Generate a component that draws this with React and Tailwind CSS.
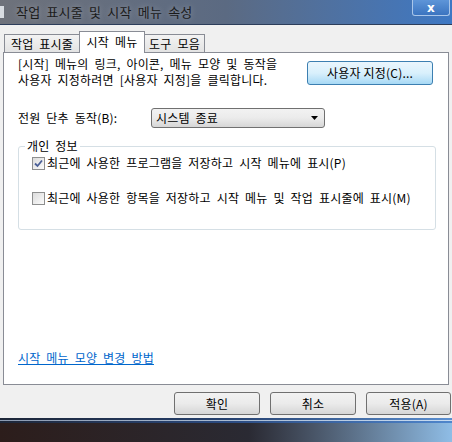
import React from 'react';

const font = { fontFamily: "'Noto Sans CJK KR', 'Liberation Sans', sans-serif" };

const WinButton = ({ children, className = '' }) => (
  <button
    className={`flex items-center justify-center rounded-[3px] border border-[#707070] bg-gradient-to-b from-[#f2f2f2] via-[#ebebeb] to-[#d6d6d6] text-[12px] text-black ${className}`}
  >
    {children}
  </button>
);

const Checkbox = ({ checked }) => (
  <span className="flex h-[13px] w-[13px] flex-shrink-0 items-center justify-center border border-[#8e8f8f] bg-gradient-to-br from-[#dcdcdc] to-[#fbfbfb]">
    {checked && (
      <svg width="9" height="9" viewBox="0 0 9 9">
        <path d="M1 4.5 L3.5 7 L8 1.5" fill="none" stroke="#4a5f97" strokeWidth="1.8" />
      </svg>
    )}
  </span>
);

export default function App() {
  return (
    <div
      className="relative h-[442px] w-[452px] overflow-hidden bg-[#f0f0f0] text-[12px] tracking-[0.2px] text-black [word-spacing:3px]"
      style={font}
    >
      {/* title bar */}
      <div className="flex h-[24px] items-center bg-gradient-to-r from-[#6e727b] via-[#5b6a82] to-[#3d78c4]">
        <div className="ml-[-4px] h-[12px] w-[8px] bg-[#d8dce2]" />
        <span className="ml-[12px] text-[13px] text-[#1b1b1b] [text-shadow:0_0_6px_rgba(255,255,255,0.35)]">
          작업 표시줄 및 시작 메뉴 속성
        </span>
        <div className="ml-auto mr-[2px] flex h-[16px] w-[38px] self-start items-center justify-center rounded-b-[3px] border border-t-0 border-[#a9c6ea] bg-gradient-to-b from-[#5e95d8] to-[#3b74c0]">
          <span className="text-[12px] font-bold leading-none text-white" style={{ fontFamily: "'DejaVu Sans', sans-serif" }}>x</span>
        </div>
      </div>
      <div className="h-px bg-[#2c3d5a]" />

      {/* tabs */}
      <div className="ml-[4px] mt-[6px] flex items-end">
        <div className="flex h-[18px] w-[75px] items-center justify-center border border-r-0 border-b-0 border-[#898c95] bg-gradient-to-b from-[#f3f3f3] to-[#e3e3e3]">
          작업 표시줄
        </div>
        <div className="relative z-10 mb-[-1px] flex h-[22px] w-[66px] items-start justify-center border border-b-0 border-[#898c95] bg-white pt-[1px]">
          시작 메뉴
        </div>
        <div className="flex h-[18px] w-[60px] items-center justify-center border border-l-0 border-b-0 border-[#898c95] bg-gradient-to-b from-[#f3f3f3] to-[#e3e3e3]">
          도구 모음
        </div>
      </div>

      {/* panel */}
      <div className="ml-[3px] flex h-[333px] w-[446px] flex-col border border-[#898c95] bg-white">
        <div className="mt-[3px] flex items-start">
          <p className="ml-[14px] w-[285px] whitespace-nowrap leading-[16px]">
            [시작] 메뉴의 링크, 아이콘, 메뉴 모양 및 동작을
            <br />
            사용자 지정하려면 [사용자 지정]을 클릭합니다.
          </p>
          <button className="ml-auto mr-[15px] mt-[5px] flex h-[24px] w-[126px] items-center justify-center rounded-[3px] border border-[#3c7fb1] bg-gradient-to-b from-[#eaf6fd] via-[#d9f0fc] to-[#a7d9f5] text-[12px]">
            사용자 지정(C)...
          </button>
        </div>

        <div className="mt-[20px] flex items-center">
          <span className="ml-[14px] w-[133px]">전원 단추 동작(B):</span>
          <div className="flex h-[20px] w-[174px] items-center rounded-[3px] border border-[#707070] bg-gradient-to-b from-[#f2f2f2] via-[#ebebeb] to-[#d6d6d6] pl-[4px] pr-[6px]">
            <span>시스템 종료</span>
            <svg className="ml-auto" width="7" height="4" viewBox="0 0 7 4">
              <path d="M0 0 H7 L3.5 4 Z" fill="#000" />
            </svg>
          </div>
        </div>

        <div className="relative ml-[14px] mt-[18px] h-[84px] w-[418px] rounded-[3px] border border-[#d5dfe5]">
          <span className="absolute left-[6px] top-[-9px] bg-white px-[2px] leading-[16px]">개인 정보</span>
          <div className="ml-[13px] mt-[8px] flex items-center gap-[2px]">
            <Checkbox checked />
            <span className="leading-[16px]">최근에 사용한 프로그램을 저장하고 시작 메뉴에 표시(P)</span>
          </div>
          <div className="ml-[13px] mt-[19px] flex items-center gap-[2px]">
            <Checkbox />
            <span className="leading-[16px]">최근에 사용한 항목을 저장하고 시작 메뉴 및 작업 표시줄에 표시(M)</span>
          </div>
        </div>

        <a className="ml-[14px] mt-auto mb-[17px] w-fit text-[#0066cc] underline">시작 메뉴 모양 변경 방법</a>
      </div>

      {/* dialog buttons */}
      <div className="mt-[7px] flex justify-end gap-[10px] pr-[1px]">
        <WinButton className="h-[23px] w-[86px]">확인</WinButton>
        <WinButton className="h-[23px] w-[86px]">취소</WinButton>
        <WinButton className="h-[23px] w-[85px]">적용(A)</WinButton>
      </div>

      {/* frame bottom + desktop */}
      <div className="absolute bottom-0 left-0 w-full">
        <div className="h-[2px] bg-gradient-to-r from-[#1d2638] via-[#25406e] to-[#5b8fd0]" />
        <div className="h-px bg-gradient-to-r from-[#8c9ab0] to-[#c8dcf2]" />
        <div className="h-[2px] bg-gradient-to-r from-[#1d2638] via-[#2a4a80] to-[#4f86cc]" />
        <div className="h-[19px] bg-gradient-to-r from-[#2c1d1b] via-[#2a2a33] via-55% to-[#8fbde6]" />
      </div>
    </div>
  );
}
